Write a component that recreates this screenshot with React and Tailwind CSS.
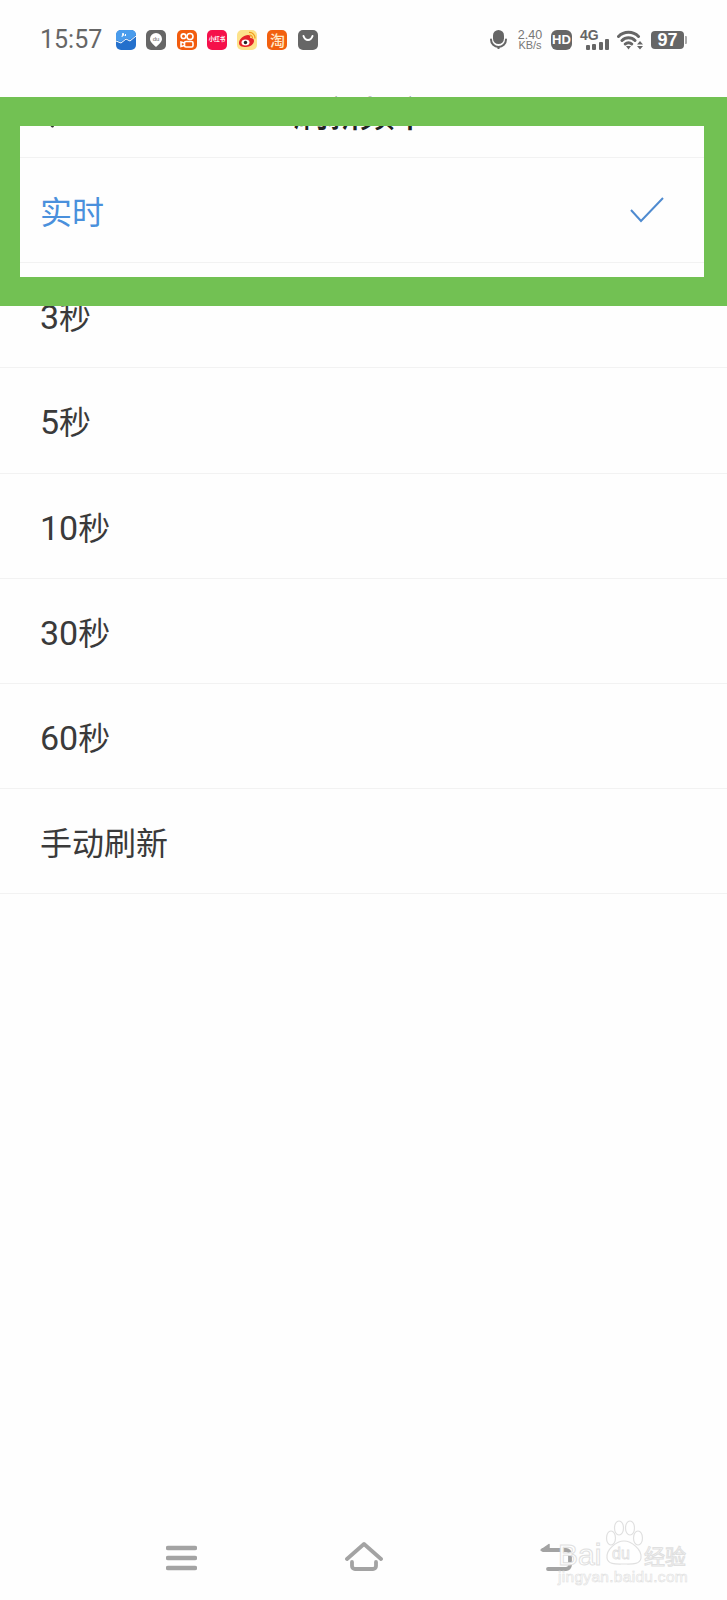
import React from 'react';
import { ChevronLeft } from 'lucide-react';

const cjk = "font-['Noto_Sans_CJK_SC','Noto_Sans',sans-serif]";

const options = [
  { num: '', unit: '实时' },
  { num: '3', unit: '秒' },
  { num: '5', unit: '秒' },
  { num: '10', unit: '秒' },
  { num: '30', unit: '秒' },
  { num: '60', unit: '秒' },
  { num: '', unit: '手动刷新' },
];

const AppIcon = ({ className = '', children }) => (
  <div className={`w-5 h-5 rounded-[5px] overflow-hidden flex items-center justify-center shrink-0 ${className}`}>
    {children}
  </div>
);

const NotificationIcons = () => (
  <div className="flex items-center gap-[10.3px]">
    <AppIcon className="bg-[#2470cc]">
      <svg viewBox="0 0 20 20" className="w-5 h-5">
        <path d="M0 0H20V5L14 10L10 8L5 12L0 10Z" fill="#4a9cec" />
        <path d="M0 11L5 13L10 9L14 11L20 6" fill="none" stroke="#fff" strokeWidth="1" />
        <path d="M6 7L7 3L8 6M9.500 6V4" fill="none" stroke="#fff" strokeWidth="1" />
      </svg>
    </AppIcon>
    <AppIcon className="bg-[#666]">
      <svg viewBox="0 0 20 20" className="w-5 h-5">
        <path d="M10 3a6 6 0 0 1 6 6c0 3-3 5-6 8c-3-3-6-5-6-8a6 6 0 0 1 6-6Z" fill="#fff" />
        <text x="10" y="10.500" textAnchor="middle" fontSize="6" fill="#666" fontFamily="Liberation Sans">du</text>
      </svg>
    </AppIcon>
    <AppIcon className="bg-[#f25c0e]">
      <svg viewBox="0 0 20 20" className="w-5 h-5" fill="none" stroke="#fff" strokeWidth="1.600">
        <circle cx="6.500" cy="6.200" r="2.300" />
        <circle cx="13" cy="6.500" r="3" />
        <rect x="7.500" y="11.500" width="8.500" height="5.500" rx="1.500" />
        <path d="M7.500 13L4 12V16.500L7.500 15.500" />
      </svg>
    </AppIcon>
    <AppIcon className={`bg-[#f5104a] text-white text-[5.500px] leading-none font-bold whitespace-nowrap ${cjk}`}>
      小红书
    </AppIcon>
    <AppIcon className="bg-[#fde28a]">
      <svg viewBox="0 0 20 20" className="w-5 h-5">
        <path d="M2 13c0-4 5-8 9-8c2 0 3 1 2 3c3 0 4 1 4 3c0 3-4 6-8 6c-4 0-7-1-7-4Z" fill="#e5232a" />
        <ellipse cx="8.500" cy="12.500" rx="4" ry="3" fill="#fff" />
        <circle cx="8.500" cy="12.500" r="1.700" fill="#222" />
        <path d="M12 2.500a5.500 5.500 0 0 1 6 6M12.500 5a3 3 0 0 1 3 3" fill="none" stroke="#f09a1a" strokeWidth="1.200" />
      </svg>
    </AppIcon>
    <AppIcon className={`bg-[#f2600f] text-[#ffe9c8] text-[15px] leading-5 font-medium ${cjk}`}>淘</AppIcon>
    <AppIcon className="bg-[#666]">
      <svg viewBox="0 0 20 20" className="w-5 h-5">
        <path d="M5.500 6c1 3 2.500 4 4.500 4s3.500-1 4.500-4" fill="none" stroke="#fff" strokeWidth="2" strokeLinecap="round" />
      </svg>
    </AppIcon>
  </div>
);

const SystemIcons = () => (
  <div className="flex items-center">
    <svg viewBox="0 0 17 19" className="w-[17px] h-[19px] text-[#666]">
      <rect x="3" y="0" width="11" height="14" rx="5.500" fill="currentColor" />
      <path d="M1 9.500a7.500 7.500 0 0 0 15 0" fill="none" stroke="currentColor" strokeWidth="2" strokeLinecap="round" />
      <path d="M8.500 17V19" stroke="currentColor" strokeWidth="2" />
    </svg>
    <div className="ml-[10px] w-[26px] flex flex-col items-center text-[#777] font-['Liberation_Sans',sans-serif]">
      <span className="text-[12.500px] leading-[12px]">2.40</span>
      <span className="text-[11px] leading-[9px] whitespace-nowrap">KB/s</span>
    </div>
    <div className="ml-2 w-[21px] h-5 rounded-[6px] bg-[#666] text-white text-[13px] font-bold leading-5 text-center font-['Liberation_Sans',sans-serif]">
      HD
    </div>
    <div className="ml-2 w-[29px] h-5 relative text-[#666]">
      <span className="absolute left-0 -top-[2px] text-[14px] leading-[14px] font-bold font-['Liberation_Sans',sans-serif]">4G</span>
      <div className="absolute right-0 bottom-0 flex items-end gap-[2.300px]">
        <div className="w-1 h-[5px] rounded-[1px] bg-[#666]" />
        <div className="w-1 h-[6px] rounded-[1px] bg-[#666]" />
        <div className="w-1 h-[8px] rounded-[1px] bg-[#666]" />
        <div className="w-1 h-[11px] rounded-[1px] bg-[#666]" />
      </div>
    </div>
    <svg viewBox="0 0 26 20" className="ml-2 w-[26px] h-5 text-[#666]">
      <path d="M1.500 6.500a14 14 0 0 1 20 0M5 10.500a9 9 0 0 1 13 0M8.300 14a4.500 4.500 0 0 1 6.400 0" fill="none" stroke="currentColor" strokeWidth="3" strokeLinecap="round" />
      <path d="M9 16h5l-2.500 3.500Z" fill="currentColor" />
      <path d="M20 14.500l3-3.500l3 3.500ZM20 16h6l-3 3.500Z" fill="currentColor" />
    </svg>
    <div className="ml-2 flex items-center">
      <div className="w-[33px] h-[18px] rounded-[4px] bg-[#666] text-white text-[18px] font-bold leading-[18px] text-center font-['Liberation_Sans',sans-serif]">
        97
      </div>
      <div className="ml-[1px] w-[2px] h-2 rounded-r-[1px] bg-[#aaa]" />
    </div>
  </div>
);

const StatusBar = () => (
  <div className="h-[66px] pt-[29px] pl-10 pr-10 flex items-start justify-between">
    <div className="flex items-center">
      <span className="w-[76px] pt-[1px] text-[25px] leading-5 text-[#666] font-['Roboto',sans-serif]">15:57</span>
      <NotificationIcons />
    </div>
    <SystemIcons />
  </div>
);

const NavBar = () => (
  <div className="flex items-end pl-[166px] pb-[28px]">
    <svg viewBox="0 0 31 26" className="w-[31px] h-[26px] text-[#a3a3a3] mb-[1px]" fill="none" stroke="currentColor" strokeWidth="4.500" strokeLinecap="round">
      <path d="M2 3H29M2 13H29M2 23H29" />
    </svg>
    <svg viewBox="0 0 38 30" className="ml-[148px] w-[38px] h-[30px] text-[#a3a3a3]" fill="none" stroke="currentColor" strokeWidth="3.800" strokeLinecap="round" strokeLinejoin="round">
      <path d="M2 17L19 2L36 17" />
      <path d="M7 20V24a3 3 0 0 0 3 3H28a3 3 0 0 0 3-3V20" />
    </svg>
    <svg viewBox="0 0 33 30" className="ml-[156px] w-[33px] h-[30px] text-[#a3a3a3]" fill="none" stroke="currentColor" strokeWidth="3.800" strokeLinecap="round" strokeLinejoin="round">
      <path d="M4 8H27a4 4 0 0 1 4 4V23a4 4 0 0 1-4 4H9" />
      <path d="M2 8L10 2.500V9Z" fill="currentColor" strokeWidth="1.500" />
    </svg>
  </div>
);

const Watermark = () => (
  <div className="absolute left-[558px] top-[1520px] w-[132px] h-[66px] text-white font-['Liberation_Sans',sans-serif] [-webkit-text-stroke:1px_#e0e0e0]">
    <svg viewBox="0 0 40 46" className="absolute left-[46px] top-0 w-10 h-[46px]" fill="#fff" stroke="#e0e0e0" strokeWidth="1.200">
      <ellipse cx="7" cy="18" rx="4.500" ry="7" />
      <ellipse cx="15" cy="8" rx="4.500" ry="7" />
      <ellipse cx="26" cy="8" rx="4.500" ry="7" />
      <ellipse cx="34" cy="18" rx="4.500" ry="7" />
      <path d="M20 21c7 0 18 8 17 17c-1 7-10 6-17 6s-16 1-17-6c-1-9 10-17 17-17Z" />
    </svg>
    <span className="absolute left-0 top-[19px] text-[30px] leading-8">Bai</span>
    <span className="absolute left-[54px] top-[26px] text-[16px] leading-4 [-webkit-text-stroke:0.8px_#e0e0e0]">du</span>
    <span className={`absolute left-[86px] top-[21px] text-[21px] leading-7 whitespace-nowrap ${cjk}`}>经验</span>
    <span className="absolute left-0 top-[49px] text-[15.500px] leading-4 tracking-[0.3px] [-webkit-text-stroke:0.6px_#e0e0e0] whitespace-nowrap">jingyan.baidu.com</span>
  </div>
);

const App = () => (
  <div className={`relative w-full h-[1600px] overflow-hidden bg-[#fefefe] flex flex-col ${cjk}`}>
    <StatusBar />

    <div className="h-[92px] relative flex items-center justify-center pr-[8px] border-b border-[#f2f2f2]">
      <ChevronLeft size={36} strokeWidth={2} className="absolute left-[30px] top-[33px] text-[#333]" />
      <h1 className="text-[35px] leading-10 tracking-[-2px] font-medium text-[#222]">刷新频率</h1>
    </div>

    <div>
      {options.map((item, i) => (
        <div
          key={item.num + item.unit}
          className={`h-[105.200px] border-b border-[#f2f2f2] pl-10 pr-[63px] flex items-center justify-between text-[32px] ${item.num ? 'pt-1' : ''} ${i === 0 ? 'text-[#4a90dc]' : 'text-[#3a3a3a]'}`}
        >
          <span>
            {item.num && <span className="text-[34px] font-['Roboto',sans-serif]">{item.num}</span>}
            {item.unit}
          </span>
          {i === 0 && (
            <svg viewBox="0 0 34 26" className="w-[34px] h-[26px] text-[#4f8bd0]" fill="none" stroke="currentColor" strokeWidth="2">
              <path d="M1 13L11 24L33 1" />
            </svg>
          )}
        </div>
      ))}
    </div>

    <div className="flex-1" />
    <NavBar />
    <Watermark />

    {/* green annotation frame over the selected row */}
    <div className="absolute left-0 top-[97px] w-full h-[209px] border-solid border-[#72c153] border-t-[29px] border-b-[29px] border-l-[20px] border-r-[23px]" />
  </div>
);

export default App;
